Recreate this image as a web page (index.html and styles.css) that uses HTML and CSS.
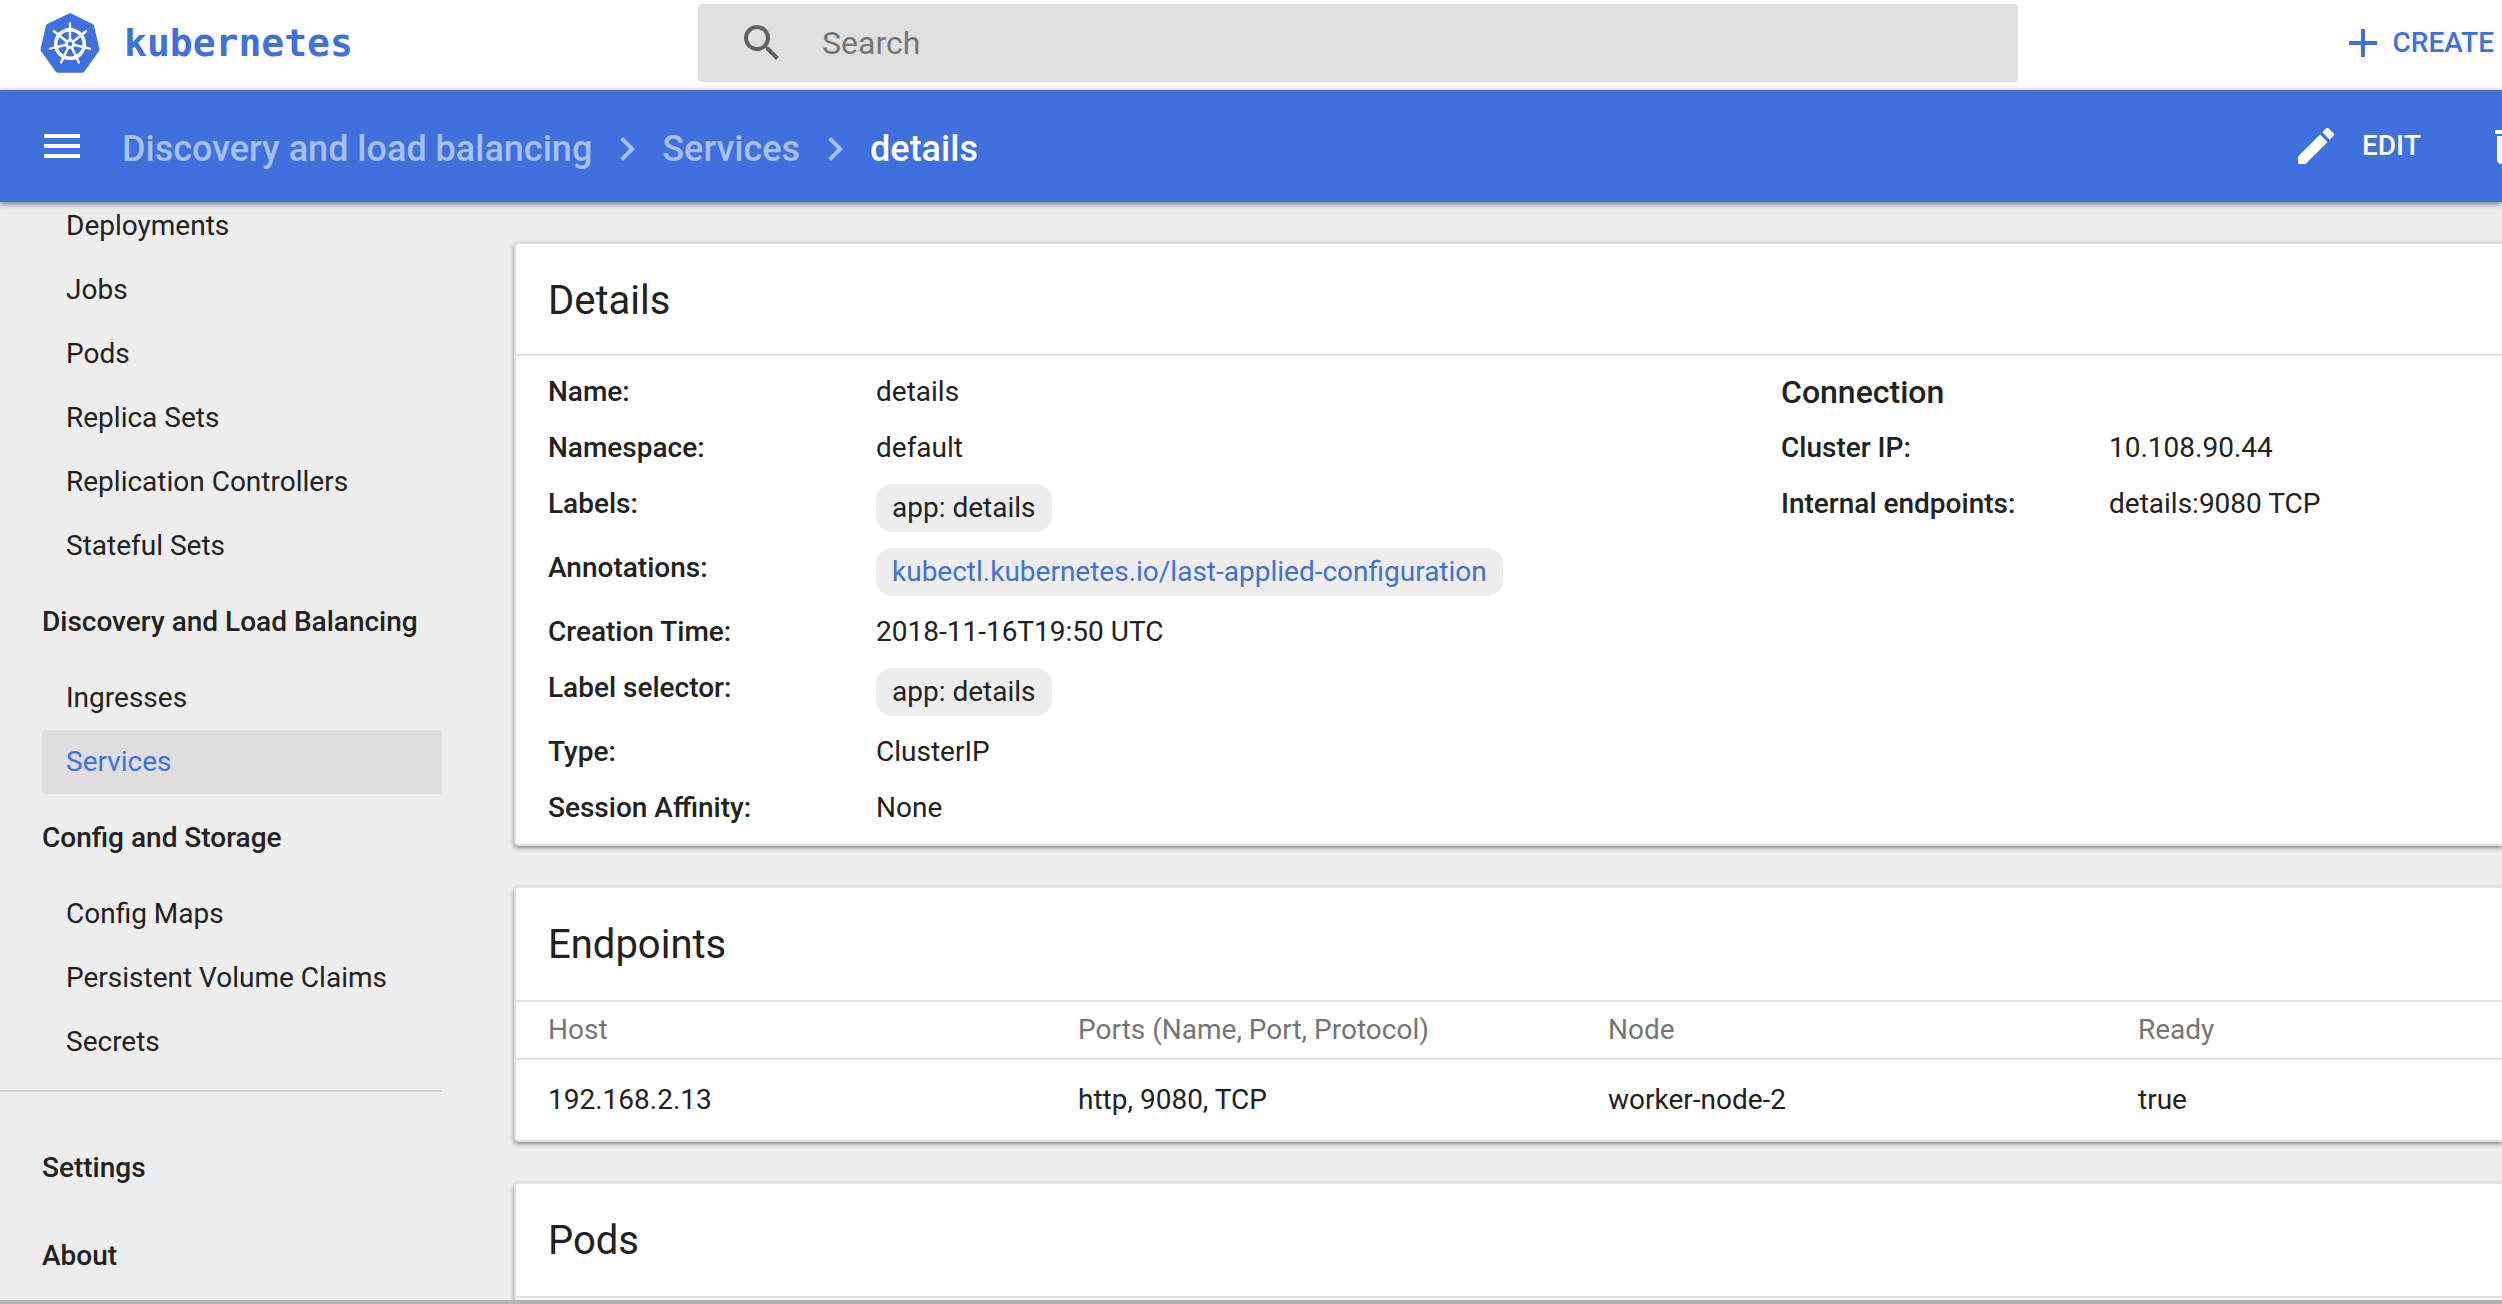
FILE: index.html
```html
<!DOCTYPE html>
<html lang="en">
<head>
<meta charset="utf-8">
<title>details - Kubernetes Dashboard</title>
<link rel="stylesheet" href="styles.css">
</head>
<body>
<div class="app">
  <header class="topbar">
    <a class="brand" href="#">
      <svg class="brand-mark" viewBox="0 0 60 60" aria-hidden="true">
        <path fill="#3f70de" stroke="#3f70de" stroke-width="5" stroke-linejoin="round" d="M30 2.800L51.600 13.200L57 36.600L42.200 57.200H17.800L3 36.600L8.400 13.200Z"/>
        <g fill="none" stroke="#fff">
          <circle cx="30" cy="31" r="14.300" stroke-width="3.600"/>
          <g stroke-width="2.400" stroke-linecap="round">
            <path d="M30 26.500V10.500"/>
            <path d="M30 26.500V10.500" transform="rotate(51.430 30 31)"/>
            <path d="M30 26.500V10.500" transform="rotate(102.860 30 31)"/>
            <path d="M30 26.500V10.500" transform="rotate(154.290 30 31)"/>
            <path d="M30 26.500V10.500" transform="rotate(205.710 30 31)"/>
            <path d="M30 26.500V10.500" transform="rotate(257.140 30 31)"/>
            <path d="M30 26.500V10.500" transform="rotate(308.570 30 31)"/>
          </g>
          <circle cx="30" cy="31" r="3.600" stroke-width="2.800"/>
        </g>
      </svg>
      <span class="brand-name">kubernetes</span>
    </a>
    <label class="search">
      <svg class="icon" viewBox="0 0 24 24" aria-hidden="true"><path d="M15.500 14h-.79l-.28-.27C15.410 12.590 16 11.110 16 9.500 16 5.910 13.090 3 9.500 3S3 5.910 3 9.500 5.910 16 9.500 16c1.610 0 3.090-.59 4.230-1.570l.27.28v.79l5 4.990L20.490 19l-4.990-5zm-6 0C7.010 14 5 11.990 5 9.500S7.010 5 9.500 5 14 7.010 14 9.500 11.990 14 9.500 14z"/></svg>
      <input type="text" placeholder="Search" aria-label="Search">
    </label>
    <button class="create" type="button">
      <svg class="icon" viewBox="0 0 24 24" aria-hidden="true"><path d="M19 13h-6v6h-2v-6H5v-2h6V5h2v6h6v2z"/></svg>
      <span>CREATE</span>
    </button>
  </header>

  <div class="toolbar">
    <button class="menu" type="button" aria-label="Toggle menu">
      <svg class="icon" viewBox="0 0 24 24" aria-hidden="true"><path d="M3 18h18v-2H3v2zm0-5h18v-2H3v2zm0-7v2h18V6H3z"/></svg>
    </button>
    <nav class="crumbs" aria-label="Breadcrumb">
      <a href="#">Discovery and load balancing</a>
      <svg class="chevron" viewBox="0 0 24 24" aria-hidden="true"><path d="M10 6L8.590 7.410 13.170 12l-4.580 4.590L10 18l6-6z"/></svg>
      <a href="#">Services</a>
      <svg class="chevron" viewBox="0 0 24 24" aria-hidden="true"><path d="M10 6L8.590 7.410 13.170 12l-4.580 4.590L10 18l6-6z"/></svg>
      <span class="current">details</span>
    </nav>
    <div class="actions">
      <button type="button">
        <svg class="icon" viewBox="0 0 24 24" aria-hidden="true"><path d="M3 17.250V21h3.750L17.810 9.940l-3.750-3.750L3 17.250zM20.710 7.040c.39-.39.39-1.020 0-1.410l-2.340-2.340c-.39-.39-1.020-.39-1.410 0l-1.830 1.830 3.750 3.750 1.830-1.830z"/></svg>
        <span>EDIT</span>
      </button>
      <button type="button" aria-label="Delete">
        <svg class="icon" viewBox="0 0 24 24" aria-hidden="true"><path d="M6 19c0 1.100.9 2 2 2h8c1.100 0 2-.9 2-2V7H6v12zM19 4h-3.500l-1-1h-5l-1 1H5v2h14V4z"/></svg>
      </button>
    </div>
  </div>

  <div class="body">
    <nav class="sidebar" aria-label="Resources">
      <a class="item" href="#">Deployments</a>
      <a class="item" href="#">Jobs</a>
      <a class="item" href="#">Pods</a>
      <a class="item" href="#">Replica Sets</a>
      <a class="item" href="#">Replication Controllers</a>
      <a class="item" href="#">Stateful Sets</a>
      <a class="group" href="#">Discovery and Load Balancing</a>
      <a class="item" href="#">Ingresses</a>
      <a class="item active" href="#">Services</a>
      <a class="group" href="#">Config and Storage</a>
      <a class="item" href="#">Config Maps</a>
      <a class="item" href="#">Persistent Volume Claims</a>
      <a class="item" href="#">Secrets</a>
      <hr>
      <a class="group" href="#">Settings</a>
      <a class="group" href="#">About</a>
    </nav>

    <main class="content">
      <section class="card">
        <h2>Details</h2>
        <div class="details">
          <dl>
            <dt>Name:</dt><dd>details</dd>
            <dt>Namespace:</dt><dd>default</dd>
            <dt>Labels:</dt><dd><span class="chip">app: details</span></dd>
            <dt>Annotations:</dt><dd><a class="chip" href="#">kubectl.kubernetes.io/last-applied-configuration</a></dd>
            <dt>Creation Time:</dt><dd>2018-11-16T19:50 UTC</dd>
            <dt>Label selector:</dt><dd><span class="chip">app: details</span></dd>
            <dt>Type:</dt><dd>ClusterIP</dd>
            <dt>Session Affinity:</dt><dd>None</dd>
          </dl>
          <div>
            <h3>Connection</h3>
            <dl>
              <dt>Cluster IP:</dt><dd>10.108.90.44</dd>
              <dt>Internal endpoints:</dt><dd>details:9080 TCP</dd>
            </dl>
          </div>
        </div>
      </section>

      <section class="card list-card">
        <h2>Endpoints</h2>
        <table>
          <thead>
            <tr><th scope="col">Host</th><th scope="col">Ports (Name, Port, Protocol)</th><th scope="col">Node</th><th scope="col">Ready</th></tr>
          </thead>
          <tbody>
            <tr><td>192.168.2.13</td><td>http, 9080, TCP</td><td>worker-node-2</td><td>true</td></tr>
          </tbody>
        </table>
      </section>

      <section class="card list-card pods">
        <h2>Pods</h2>
      </section>
    </main>
  </div>
</div>
</body>
</html>
```
FILE: styles.css
```css
* {
  box-sizing: border-box;
}

body {
  margin: 0;
  font: 400 28px/56px Roboto, sans-serif;
  color: #212121;
  background: #eee;
}

a {
  color: inherit;
  text-decoration: none;
}

button {
  display: flex;
  align-items: center;
  padding: 0;
  border: 0;
  background: none;
  color: inherit;
  font: 500 28px/56px Roboto, sans-serif;
  cursor: pointer;
}

.icon {
  flex: none;
  width: 48px;
  height: 48px;
  fill: currentColor;
}

.app {
  display: flex;
  flex-direction: column;
  height: 100vh;
  overflow: hidden;
  border-bottom: 4px solid #b4b4b4;
}

/* Top bar */
.topbar {
  display: flex;
  flex: none;
  align-items: center;
  height: 90px;
  padding: 0 8px 4px 40px;
  background: #fff;
  color: #3f70de;
}

.brand {
  display: flex;
  align-items: center;
  gap: 24px;
  width: 658px;
}

.brand-mark {
  width: 60px;
  height: 60px;
}

.brand-name {
  font: 700 38px/58px "DejaVu Sans Mono", monospace;
}

.search {
  display: flex;
  flex: 0 1 1320px;
  align-items: center;
  gap: 36px;
  height: 78px;
  padding-left: 40px;
  border-radius: 4px;
  background: #e0e0e0;
  color: #616161;
}

.search input {
  flex: 1;
  min-width: 0;
  padding: 0;
  border: 0;
  outline: 0;
  background: none;
  color: #212121;
  font: 400 32px/40px Roboto, sans-serif;
}

.search input::placeholder {
  color: #757575;
  opacity: 1;
}

.create {
  gap: 6px;
  margin-left: auto;
}

/* Toolbar with breadcrumbs */
.toolbar {
  position: relative;
  z-index: 1;
  display: flex;
  flex: none;
  align-items: center;
  height: 112px;
  padding-left: 38px;
  background: #3f70de;
  color: #fff;
  box-shadow: 0 2px 6px rgba(0, 0, 0, 0.5);
}

.crumbs {
  display: flex;
  align-items: center;
  gap: 11px;
  margin-left: 36px;
  padding-top: 6px;
  font-size: 36px;
  font-weight: 500;
}

.crumbs a,
.chevron {
  color: #a8c0f2;
}

.chevron {
  width: 48px;
  height: 48px;
  fill: currentColor;
}

.actions {
  display: flex;
  gap: 64px;
  width: 210px;
  margin-left: auto;
}

.actions button {
  flex: none;
  gap: 22px;
}

/* Body */
.body {
  display: flex;
  flex: 1;
  min-height: 0;
}

.sidebar {
  flex: none;
  width: 442px;
  margin-top: -8px;
}

.sidebar a {
  display: block;
  margin-left: 42px;
}

.item {
  padding-left: 24px;
  border-radius: 4px;
  line-height: 64px;
}

.active {
  background: #dedede;
  color: #3f70de;
}

.group {
  font-weight: 500;
  line-height: 88px;
}

.sidebar hr {
  height: 2px;
  margin: 16px 0 32px;
  border: 0;
  background: #d0d0d0;
}

.content {
  display: flex;
  flex: 1;
  flex-direction: column;
  gap: 40px;
  min-width: 0;
  padding: 40px 0 0 72px;
}

.card {
  flex: none;
  border: 2px solid #e0e0e0;
  border-right: 0;
  border-radius: 4px 0 0 4px;
  background: #fff;
  box-shadow: 0 2px 4px rgba(0, 0, 0, 0.45);
}

.card h2 {
  margin: 0;
  padding: 28px 32px 24px;
  border-bottom: 2px solid #e0e0e0;
  font-size: 40px;
  font-weight: 400;
  line-height: 58px;
}

.list-card h2 {
  padding-bottom: 26px;
}

.pods {
  padding-bottom: 56px;
}

.details {
  display: grid;
  grid-template-columns: 1233px 1fr;
  padding: 8px 0 8px 32px;
}

.details dl {
  display: grid;
  grid-template-columns: 328px 1fr;
  margin: 0;
}

.details dt {
  font-weight: 500;
}

.details dd {
  margin: 0;
}

.details h3 {
  margin: 0;
  font-size: 32px;
  font-weight: 500;
}

.chip {
  display: block;
  width: fit-content;
  margin: 8px 0;
  padding: 0 16px;
  border-radius: 16px;
  background: #eee;
  line-height: 48px;
}

a.chip {
  color: #3f70de;
}

table {
  width: 100%;
  border-collapse: collapse;
  table-layout: fixed;
}

th,
td {
  width: 530px;
  padding: 0 0 0 32px;
  text-align: left;
}

th:last-child,
td:last-child {
  width: auto;
}

th {
  border-bottom: 2px solid #e0e0e0;
  color: #757575;
  font-weight: 400;
}

td {
  line-height: 80px;
}
```
